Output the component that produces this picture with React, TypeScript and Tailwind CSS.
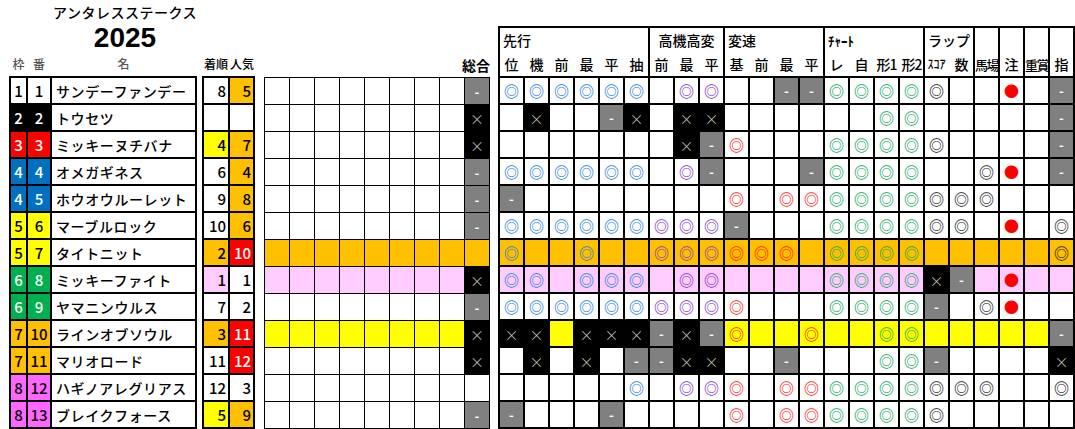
import type { ReactNode } from 'react';

type Row = {
	waku: number;
	ban: number;
	name: string;
	chaku: string;
	ninki: string;
	chakuBg: string;
	ninkiBg: string;
	hl: string;
	sogo: string;
	marks: string;
};

// marks: B=blue ◎, P=purple ◎, R=red ◎, G=green ◎, K=black ◎, X=×, D=-, O=●, .=empty
const rows: Row[] = [
	{ waku: 1, ban: 1, name: 'サンデーファンデー', chaku: '8', ninki: '5', chakuBg: 'w', ninkiBg: 'o', hl: 'w', sogo: 'D', marks: ['BBBBBB', '.PP', '..DD', 'GGGG', 'K.', '.', 'O', '.', 'D'].join('') },
	{ waku: 2, ban: 2, name: 'トウセツ', chaku: '', ninki: '', chakuBg: 'w', ninkiBg: 'w', hl: 'w', sogo: 'X', marks: ['.X..DX', '.XX', '....', '..GG', '..', '.', '.', '.', 'D'].join('') },
	{ waku: 3, ban: 3, name: 'ミッキーヌチバナ', chaku: '4', ninki: '7', chakuBg: 'y', ninkiBg: 'o', hl: 'w', sogo: 'X', marks: ['......', '.XD', 'R...', 'GGGG', 'K.', '.', '.', '.', 'D'].join('') },
	{ waku: 4, ban: 4, name: 'オメガギネス', chaku: '6', ninki: '4', chakuBg: 'w', ninkiBg: 'o', hl: 'w', sogo: 'D', marks: ['BBBBBB', '.PD', '...D', 'GGGG', '..', 'K', 'O', '.', 'D'].join('') },
	{ waku: 4, ban: 5, name: 'ホウオウルーレット', chaku: '9', ninki: '8', chakuBg: 'w', ninkiBg: 'o', hl: 'w', sogo: 'D', marks: ['D.....', '...', 'R.RR', 'GGGG', 'KK', 'K', '.', '.', '.'].join('') },
	{ waku: 5, ban: 6, name: 'マーブルロック', chaku: '10', ninki: '6', chakuBg: 'w', ninkiBg: 'o', hl: 'w', sogo: 'D', marks: ['BBBBBB', 'PPP', 'D...', 'GGGG', 'KK', '.', 'O', '.', 'K'].join('') },
	{ waku: 5, ban: 7, name: 'タイトニット', chaku: '2', ninki: '10', chakuBg: 'o', ninkiBg: 'r', hl: 'o', sogo: '.', marks: ['B..B..', 'PPP', 'RRR.', 'GGGG', '..', '.', '.', '.', 'K'].join('') },
	{ waku: 6, ban: 8, name: 'ミッキーファイト', chaku: '1', ninki: '1', chakuBg: 'p', ninkiBg: 'w', hl: 'p', sogo: 'X', marks: ['BB.BBB', '.PP', '....', 'GGGG', 'XD', '.', 'O', '.', '.'].join('') },
	{ waku: 6, ban: 9, name: 'ヤマニンウルス', chaku: '7', ninki: '2', chakuBg: 'w', ninkiBg: 'w', hl: 'w', sogo: 'D', marks: ['BBBBBB', 'PPP', 'R...', 'GGGG', 'D.', 'K', 'O', '.', '.'].join('') },
	{ waku: 7, ban: 10, name: 'ラインオブソウル', chaku: '3', ninki: '11', chakuBg: 'o', ninkiBg: 'r', hl: 'y', sogo: 'X', marks: ['XX.XXX', 'DXD', 'R..R', '..GG', '..', '.', '.', '.', 'D'].join('') },
	{ waku: 7, ban: 11, name: 'マリオロード', chaku: '11', ninki: '12', chakuBg: 'w', ninkiBg: 'r', hl: 'w', sogo: 'X', marks: ['.X.X.D', 'DXX', '..D.', '..GG', 'D.', '.', '.', '.', 'X'].join('') },
	{ waku: 8, ban: 12, name: 'ハギノアレグリアス', chaku: '12', ninki: '3', chakuBg: 'w', ninkiBg: 'w', hl: 'w', sogo: '.', marks: ['.....B', '.PP', 'R.RR', 'GGGG', 'KK', 'K', '.', '.', 'K'].join('') },
	{ waku: 8, ban: 13, name: 'ブレイクフォース', chaku: '5', ninki: '9', chakuBg: 'y', ninkiBg: 'o', hl: 'w', sogo: 'D', marks: ['D...D.', '...', 'R.RR', 'GGGG', 'K.', '.', '.', '.', '.'].join('') },
];

const wakuColor: Record<number, string> = {
	1: 'bg-white text-black',
	2: 'bg-black text-white',
	3: 'bg-[#ff0000] text-white',
	4: 'bg-[#0070c0] text-white',
	5: 'bg-[#ffff00] text-black',
	6: 'bg-[#00b050] text-white',
	7: 'bg-[#ffc000] text-black',
	8: 'bg-[#ff66ff] text-black',
};

const fill: Record<string, string> = {
	w: 'bg-white',
	o: 'bg-[#ffc000]',
	y: 'bg-[#ffff00]',
	p: 'bg-[#ffccff]',
	r: 'bg-[#ff0000] text-white',
};

const ringColor: Record<string, string> = {
	B: 'text-[#1a7fdc]',
	P: 'text-[#8436c4]',
	R: 'text-[#ff1a1a]',
	G: 'text-[#0aa85c]',
	K: 'text-[#1a1a26]',
};

const headerGroups: { label: string; subs: string[]; cols: string; center?: boolean; small?: boolean }[] = [
	{ label: '先行', subs: ['位', '機', '前', '最', '平', '抽'], cols: 'grid-cols-[repeat(6,23px)]' },
	{ label: '高機高変', subs: ['前', '最', '平'], cols: 'grid-cols-[repeat(3,23px)]', center: true },
	{ label: '変速', subs: ['基', '前', '最', '平'], cols: 'grid-cols-[repeat(4,23px)]' },
	{ label: 'ﾁｬｰﾄ', subs: ['レ', '自', '形1', '形2'], cols: 'grid-cols-[repeat(4,23px)]', small: true },
	{ label: 'ラップ', subs: ['ｽｺｱ', '数'], cols: 'grid-cols-[repeat(2,23px)]' },
];

function MarkCell({ m, bg }: { m: string; bg: string }) {
	const base = 'flex items-center justify-center leading-none';
	if (m === 'X')
		return <div className={`${base} bg-black text-[#d6d2c2] text-[14px] font-light`}>×</div>;
	if (m === 'D')
		return <div className={`${base} bg-[#808080] text-white text-[13px] font-bold`}>-</div>;
	if (m === 'O')
		return <div className={`${base} ${bg} text-[#ff0000] text-[15px]`}>●</div>;
	if (ringColor[m])
		return <div className={`${base} ${bg} ${ringColor[m]} text-[15px] font-bold`}>◎</div>;
	return <div className={bg} />;
}

function SingleHead({ children }: { children: ReactNode }) {
	return (
		<div className="bg-white flex flex-col">
			<div className="h-[24px]" />
			<div className="flex-1 flex items-center justify-center whitespace-nowrap">{children}</div>
		</div>
	);
}

export default function App() {
	return (
		<div className="w-[1075px] h-[429px] bg-white flex items-end overflow-hidden text-black font-['Noto_Sans_CJK_JP','Noto_Sans',sans-serif] font-medium">
			{/* left: title, horse list, results */}
			<div className="ml-[9px] flex flex-col">
				<div className="h-[76px] flex flex-col">
					<div className="w-[232px] mt-[4px] text-center text-[14px] leading-[16px] tracking-[0.5px]">
						アンタレスステークス
					</div>
					<div className="w-[232px] mt-[2px] text-center text-[28px] leading-[32px] font-bold font-['Liberation_Sans',sans-serif]">
						2025
					</div>
					<div className="mt-[3px] flex text-[12px] leading-[14px] whitespace-nowrap">
						<div className="w-[188px] px-[2px] grid grid-cols-[15px_22px_143px] gap-[2px] text-center text-[#555]">
							<div>枠</div>
							<div>番</div>
							<div>名</div>
						</div>
						<div className="ml-[5px] w-[53px] px-[2px] grid grid-cols-[24px_23px] gap-[2px] text-center">
							<div>着順</div>
							<div>人気</div>
						</div>
					</div>
				</div>
				<div className="flex gap-[5px]">
					<div className="w-[188px] bg-black p-[2px] grid grid-cols-[15px_22px_143px] auto-rows-[25px] gap-[2px] text-[15px] leading-none">
						{rows.map((r) => (
							<div key={r.ban} className="contents">
								<div className={`flex items-center justify-center ${wakuColor[r.waku]}`}>{r.waku}</div>
								<div className={`flex items-center justify-center ${wakuColor[r.waku]}`}>{r.ban}</div>
								<div className="bg-white flex items-center pl-[4px] text-[14px] tracking-[0.6px] whitespace-nowrap">
									{r.name}
								</div>
							</div>
						))}
					</div>
					<div className="w-[53px] bg-black p-[2px] grid grid-cols-[24px_23px] auto-rows-[25px] gap-[2px] text-[15px] leading-none">
						{rows.map((r) => (
							<div key={r.ban} className="contents">
								<div className={`flex items-center justify-end pr-[2px] ${fill[r.chakuBg]}`}>{r.chaku}</div>
								<div className={`flex items-center justify-end pr-[2px] ${fill[r.ninkiBg]}`}>{r.ninki}</div>
							</div>
						))}
					</div>
				</div>
			</div>

			{/* middle: blank grid + 総合 */}
			<div className="ml-[9px] flex flex-col">
				<div className="h-[77px] flex items-end justify-end pb-[4px] text-[14px] leading-[16px] font-bold">総合</div>
				<div className="w-[226px] bg-black p-[1px] grid grid-cols-[repeat(9,24px)] auto-rows-[26px] gap-[1px]">
					{rows.map((r) => (
						<div key={r.ban} className="contents">
							{Array.from({ length: 8 }).map((_, i) => (
								<div key={i} className={fill[r.hl]} />
							))}
							<MarkCell m={r.sogo} bg={fill[r.hl]} />
						</div>
					))}
				</div>
			</div>

			{/* right: analysis table */}
			<div className="ml-[8px] w-[577px] bg-black p-[2px] flex flex-col gap-[2px] text-[14px] leading-none">
				<div className="h-[48px] grid grid-cols-[148px_73px_98px_98px_48px_23px_23px_23px_23px] gap-[2px]">
					{headerGroups.map((g) => (
						<div key={g.label} className="bg-white flex flex-col">
							<div
								className={`h-[24px] flex items-center whitespace-nowrap ${g.center ? 'justify-center' : 'pl-[3px]'} ${g.small ? 'text-[13px] font-bold' : ''}`}
							>
								{g.label}
							</div>
							<div className={`flex-1 grid ${g.cols} gap-[2px]`}>
								{g.subs.map((s, i) => (
									<div
										key={i}
										className={`flex items-center justify-center whitespace-nowrap ${s === 'ｽｺｱ' ? 'text-[12px]' : ''} ${s.length > 1 && s !== 'ｽｺｱ' ? 'tracking-[-1px]' : ''}`}
									>
										{s}
									</div>
								))}
							</div>
						</div>
					))}
					<SingleHead>
						<span className="text-[13px] tracking-[-1.5px]">馬場</span>
					</SingleHead>
					<SingleHead>注</SingleHead>
					<SingleHead>
						<span className="text-[13px] tracking-[-1.5px]">重賞</span>
					</SingleHead>
					<SingleHead>指</SingleHead>
				</div>
				<div className="grid grid-cols-[repeat(23,23px)] auto-rows-[25px] gap-[2px]">
					{rows.map((r) => (
						<div key={r.ban} className="contents">
							{r.marks.split('').map((m, i) => (
								<MarkCell key={i} m={m} bg={fill[r.hl]} />
							))}
						</div>
					))}
				</div>
			</div>
		</div>
	);
}
